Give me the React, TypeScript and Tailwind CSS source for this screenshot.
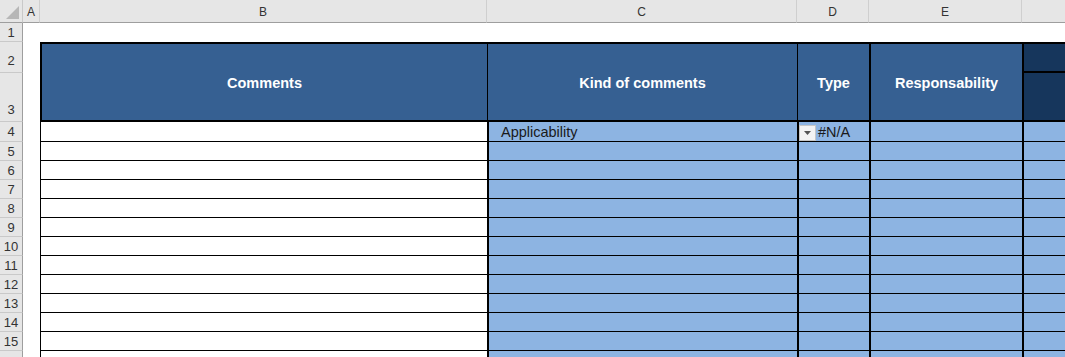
import React from "react";

const letters = ["A", "B", "C", "D", "E", ""];
const dataRows = Array.from({ length: 13 }, (_, i) => i + 4);

function RowNum({ n, bottom }: { n: number | string; bottom?: boolean }) {
  return (
    <div
      className={
        "flex justify-center border-b border-r border-b-[#c9c9c9] border-r-[#9e9e9e] bg-[#e6e6e6] text-[13px] text-[#333] " +
        (bottom ? "items-end pb-[2px]" : "items-center pt-[1px]")
      }
    >
      {n}
    </div>
  );
}

export default function App() {
  return (
    <div
      className="h-[357px] w-[1065px] overflow-hidden bg-white"
      style={{ fontFamily: '"Liberation Sans", Arial, sans-serif' }}
    >
      <div className="grid grid-cols-[23px_17px_447px_310px_72px_153px_220px] grid-rows-[23px_19px_31px_49px_20px_repeat(12,19px)]">
        {/* column headers */}
        <div className="relative border-b border-r border-b-[#9e9e9e] border-r-[#c9c9c9] bg-[#e6e6e6]">
          <svg className="absolute bottom-[3px] right-[3px]" width="13" height="13">
            <polygon points="13,0 13,13 0,13" fill="#b7b7b7" />
          </svg>
        </div>
        {letters.map((l, i) => (
          <div
            key={i}
            className="flex items-center justify-center border-b border-r border-b-[#9e9e9e] border-r-[#cfcfcf] bg-[#e6e6e6] pt-[2px] text-[12px] text-[#333]"
          >
            {l}
          </div>
        ))}

        {/* row 1 */}
        <RowNum n={1} />
        <div className="col-span-6 bg-white" />

        {/* rows 2-3 header */}
        <div className="row-span-2 grid grid-rows-[31px_49px]">
          <RowNum n={2} bottom />
          <RowNum n={3} bottom />
        </div>
        <div className="row-span-2 bg-white" />
        <div className="row-span-2 flex items-center justify-center border-y-2 border-l-2 border-black bg-[#366092] pt-[3px] text-[14.5px] font-bold text-white">
          Comments
        </div>
        <div className="row-span-2 flex items-center justify-center border-y-2 border-l border-black bg-[#366092] pt-[3px] text-[14.5px] font-bold text-white">
          Kind of comments
        </div>
        <div className="row-span-2 flex items-center justify-center border-y-2 border-l border-black bg-[#366092] pt-[3px] text-[14.5px] font-bold text-white">
          Type
        </div>
        <div className="row-span-2 flex items-center justify-center border-y-2 border-l-2 border-black bg-[#366092] pt-[3px] text-[14.5px] font-bold text-white">
          Responsability
        </div>
        <div className="row-span-2 grid grid-rows-[31px_49px]">
          <div className="border-y-2 border-l-2 border-black bg-[#16365c]" />
          <div className="border-b-2 border-l-2 border-black bg-[#16365c]" />
        </div>

        {/* data rows */}
        {dataRows.map((r) => (
          <React.Fragment key={r}>
            <RowNum n={r < 16 ? r : ""} />
            <div className="bg-white" />
            <div className="border-b border-l border-black bg-white" />
            <div className="flex items-center border-b border-l-2 border-black bg-[#8db4e2] pl-[12px] pt-[3px] text-[14.5px] text-[#1a1a1a]">
              {r === 4 ? "Applicability" : ""}
            </div>
            <div className="flex items-center border-b border-l-2 border-black bg-[#8db4e2] pt-[2px] text-[14.5px] text-[#1a1a1a]">
              {r === 4 && (
                <>
                  <div className="flex h-[16px] w-[17px] items-center justify-center border border-[#c6c6c6] bg-[#f3f3f3]">
                    <svg width="7" height="4">
                      <polygon points="0,0 7,0 3.5,4" fill="#555" />
                    </svg>
                  </div>
                  <span className="ml-[2px] pt-[1px]">#N/A</span>
                </>
              )}
            </div>
            <div className="border-b border-l-2 border-black bg-[#8db4e2]" />
            <div className="border-b border-l-2 border-black bg-[#8db4e2]" />
          </React.Fragment>
        ))}
      </div>
    </div>
  );
}
